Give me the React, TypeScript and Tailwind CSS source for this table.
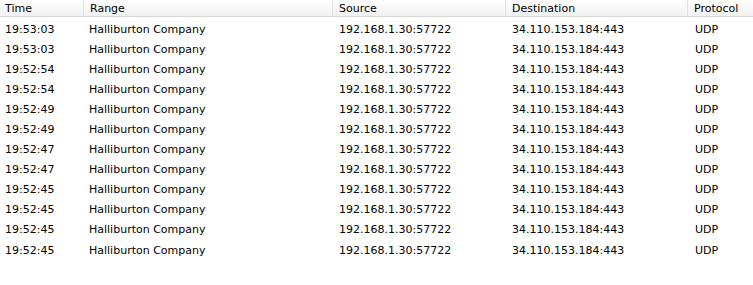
import React from "react";

const times = [
  "19:53:03",
  "19:53:03",
  "19:52:54",
  "19:52:54",
  "19:52:49",
  "19:52:49",
  "19:52:47",
  "19:52:47",
  "19:52:45",
  "19:52:45",
  "19:52:45",
  "19:52:45",
];

const cols = "grid grid-cols-[83px_249px_173px_182px_1fr]";

export default function App() {
  return (
    <div
      className="w-[753px] h-[285px] bg-white text-[11px] text-[#000] overflow-hidden"
      style={{ fontFamily: '"DejaVu Sans", Verdana, sans-serif' }}
    >
      <div className={`${cols} h-[17px] bg-gradient-to-b from-white to-[#f1f1f2] border-b border-[#d8d8d8]`}>
        {["Time", "Range", "Source", "Destination", "Protocol"].map((h, i) => (
          <div
            key={h}
            className={`flex items-center leading-none ${i === 0 ? "pl-[5px]" : "pl-[6px] border-l border-[#e3e3e3]"}`}
          >
            {h}
          </div>
        ))}
      </div>
      <div className="pt-[2px]">
        {times.map((t, i) => (
          <div key={i} className={`${cols} h-[20.1px] items-center leading-none`}>
            <div className="pl-[5px]">{t}</div>
            <div className="pl-[6px]">Halliburton Company</div>
            <div className="pl-[7px]">192.168.1.30:57722</div>
            <div className="pl-[7px]">34.110.153.184:443</div>
            <div className="pl-[8px]">UDP</div>
          </div>
        ))}
      </div>
    </div>
  );
}
